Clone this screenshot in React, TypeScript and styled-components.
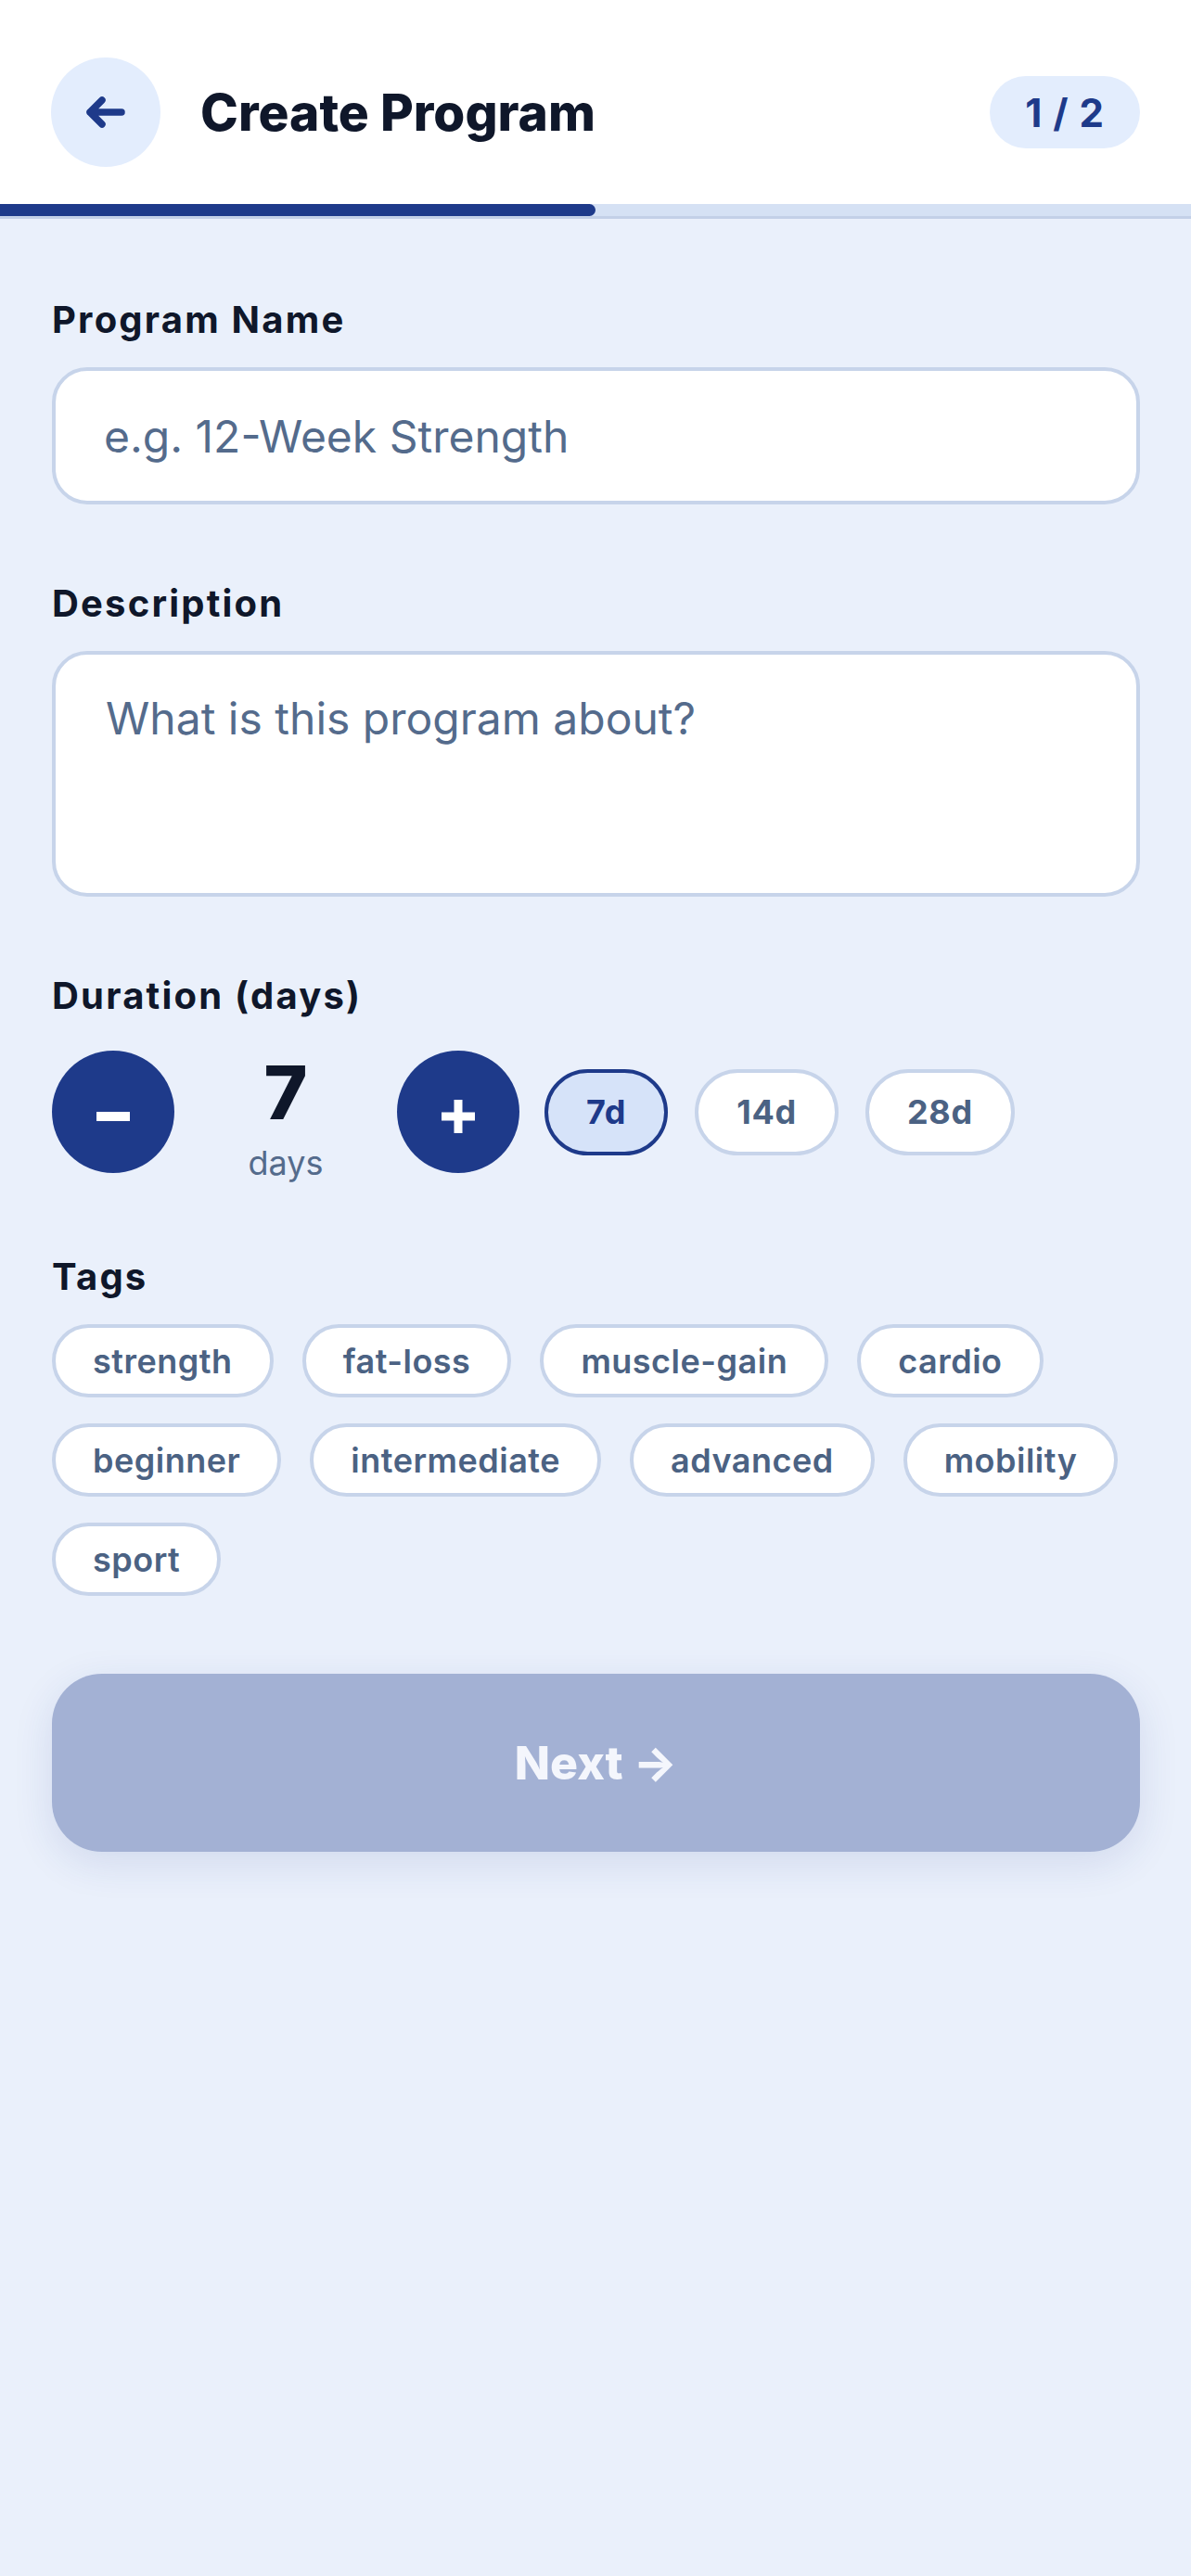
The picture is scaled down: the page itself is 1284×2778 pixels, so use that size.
import React, { useState } from 'react';
import styled, { createGlobalStyle } from 'styled-components';

const GlobalStyle = createGlobalStyle`
    html, body {
        margin: 0;
        padding: 0;
        background: #eaf0fb;
    }
    * {
        box-sizing: border-box;
    }
    body {
        font-family: Inter, 'Noto Sans', 'Liberation Sans', sans-serif;
        -webkit-font-smoothing: antialiased;
    }
`;

const Screen = styled.div`
    display: flex;
    flex-direction: column;
    min-height: 100vh;
    background: #eaf0fb;
`;

const Header = styled.header`
    background: #ffffff;
`;

const TopBar = styled.div`
    display: flex;
    align-items: center;
    gap: 43px;
    padding: 62px 55px 40px 55px;
`;

const BackButton = styled.button`
    display: flex;
    justify-content: center;
    align-items: center;
    width: 118px;
    height: 118px;
    border-radius: 50%;
    border: none;
    background: #e3edfd;
    cursor: pointer;
    padding: 0;
`;

const Title = styled.h1`
    margin: 0;
    font-size: 55px;
    font-weight: 800;
    color: #0f172a;
`;

const StepBadge = styled.span`
    margin-left: auto;
    display: flex;
    align-items: center;
    height: 78px;
    padding: 0 38px;
    border-radius: 39px;
    background: #e3edfd;
    color: #1e3a8a;
    font-size: 42px;
    font-weight: 700;
    letter-spacing: 1px;
`;

const Track = styled.div`
    height: 16px;
    background: #d5e1f4;
    border-bottom: 3px solid #c3d0e7;
`;

const Fill = styled.div`
    height: 100%;
    background: #1e3a8a;
    border-radius: 0 7px 7px 0;
`;

const Content = styled.main`
    display: flex;
    flex-direction: column;
    gap: 84px;
    padding: 86px 55px 80px 56px;
`;

const Field = styled.section`
    display: flex;
    flex-direction: column;
    gap: 28px;
`;

const Label = styled.label`
    font-size: 40px;
    line-height: 46px;
    font-weight: 700;
    letter-spacing: 2.2px;
    color: #0f172a;
`;

const TextInput = styled.input`
    width: 100%;
    height: 148px;
    padding: 0 52px;
    border: 4px solid #c7d4ea;
    border-radius: 38px;
    background: #ffffff;
    font-family: inherit;
    font-size: 48px;
    color: #0f172a;
    outline: none;

    &::placeholder {
        color: #546b8c;
    }
`;

const TextArea = styled.textarea`
    width: 100%;
    height: 265px;
    padding: 38px 54px;
    border: 4px solid #c7d4ea;
    border-radius: 38px;
    background: #ffffff;
    font-family: inherit;
    font-size: 48px;
    line-height: 1.3;
    color: #0f172a;
    outline: none;
    resize: none;

    &::placeholder {
        color: #546b8c;
    }
`;

const StepperRow = styled.div`
    display: flex;
    align-items: center;
    gap: 27px;
    margin-top: 8px;
`;

const RoundButton = styled.button`
    display: flex;
    justify-content: center;
    align-items: center;
    width: 132px;
    height: 132px;
    border-radius: 50%;
    border: none;
    background: #1e3a8a;
    padding: 0;
    cursor: pointer;
    flex-shrink: 0;
`;

const Count = styled.div`
    display: flex;
    flex-direction: column;
    align-items: center;
    justify-content: flex-start;
    width: 186px;
    height: 132px;
`;

const CountValue = styled.span`
    font-size: 80px;
    line-height: 90px;
    font-weight: 800;
    color: #0f172a;
`;

const CountUnit = styled.span`
    margin-top: 9px;
    font-size: 36px;
    line-height: 44px;
    color: #546b8c;
`;

const Presets = styled.div`
    display: flex;
    gap: 29px;
`;

const Chip = styled.button<{ $active?: boolean }>`
    display: flex;
    align-items: center;
    height: 79px;
    padding: 0 40px;
    border-radius: 48px;
    border: 4px solid ${(p) => (p.$active ? '#1e3a8a' : '#c7d4ea')};
    background: ${(p) => (p.$active ? '#d6e3f9' : '#ffffff')};
    color: ${(p) => (p.$active ? '#1e3a8a' : '#4b6283')};
    font-family: inherit;
    font-size: 36px;
    font-weight: 600;
    letter-spacing: 0.5px;
    cursor: pointer;
    white-space: nowrap;
`;

const PresetChip = styled(Chip)`
    height: 93px;
    padding: 0 41px;
    font-weight: 700;
    letter-spacing: 0.7px;
`;

const TagList = styled.div`
    display: flex;
    flex-wrap: wrap;
    gap: 28px 31px;
`;

const TagsField = styled(Field)`
    margin-top: 5px;
`;

const NextButton = styled.button`
    display: flex;
    justify-content: center;
    align-items: center;
    width: 100%;
    height: 192px;
    border: none;
    border-radius: 54px;
    background: #a3b1d4;
    color: #f4f6fc;
    font-family: inherit;
    font-size: 50px;
    font-weight: 800;
    box-shadow: 0 12px 44px rgba(30, 58, 138, 0.12);
    cursor: pointer;
`;

const BackArrow = () => (
    <svg width="48" height="40" viewBox="0 0 48 40" fill="none">
        <path d="M7 20 H41 M20 7 L7 20 L20 33" stroke="#1e3a8a" strokeWidth="7.5" strokeLinecap="round" strokeLinejoin="round" />
    </svg>
);

const MinusIcon = () => (
    <svg width="48" height="48" viewBox="0 0 48 48">
        <rect x="6" y="24" width="36" height="10" fill="#ffffff" />
    </svg>
);

const PlusIcon = () => (
    <svg width="48" height="48" viewBox="0 0 48 48">
        <rect x="19.5" y="11" width="9" height="36" fill="#ffffff" />
        <rect x="6" y="24.5" width="36" height="9" fill="#ffffff" />
    </svg>
);

const TAGS = ['strength', 'fat-loss', 'muscle-gain', 'cardio', 'beginner', 'intermediate', 'advanced', 'mobility', 'sport'];
const PRESETS = [7, 14, 28];

export default function App() {
    const step = 1;
    const total = 2;
    const [days, setDays] = useState(7);

    return (
        <Screen>
            <GlobalStyle />
            <Header>
                <TopBar>
                    <BackButton aria-label="Back">
                        <BackArrow />
                    </BackButton>
                    <Title>Create Program</Title>
                    <StepBadge>{step} / {total}</StepBadge>
                </TopBar>
                <Track>
                    <Fill style={{ width: `${(step / total) * 100}%` }} />
                </Track>
            </Header>

            <Content>
                <Field>
                    <Label>Program Name</Label>
                    <TextInput placeholder="e.g. 12-Week Strength" />
                </Field>

                <Field>
                    <Label>Description</Label>
                    <TextArea placeholder="What is this program about?" />
                </Field>

                <Field>
                    <Label>Duration (days)</Label>
                    <StepperRow>
                        <RoundButton aria-label="Decrease" onClick={() => setDays(Math.max(1, days - 1))}>
                            <MinusIcon />
                        </RoundButton>
                        <Count>
                            <CountValue>{days}</CountValue>
                            <CountUnit>days</CountUnit>
                        </Count>
                        <RoundButton aria-label="Increase" onClick={() => setDays(days + 1)}>
                            <PlusIcon />
                        </RoundButton>
                        <Presets>
                            {PRESETS.map((d) => (
                                <PresetChip key={d} $active={d === days} onClick={() => setDays(d)}>
                                    {d}d
                                </PresetChip>
                            ))}
                        </Presets>
                    </StepperRow>
                </Field>

                <TagsField>
                    <Label>Tags</Label>
                    <TagList>
                        {TAGS.map((t) => (
                            <Chip key={t}>{t}</Chip>
                        ))}
                    </TagList>
                </TagsField>

                <NextButton>Next →</NextButton>
            </Content>
        </Screen>
    );
}
